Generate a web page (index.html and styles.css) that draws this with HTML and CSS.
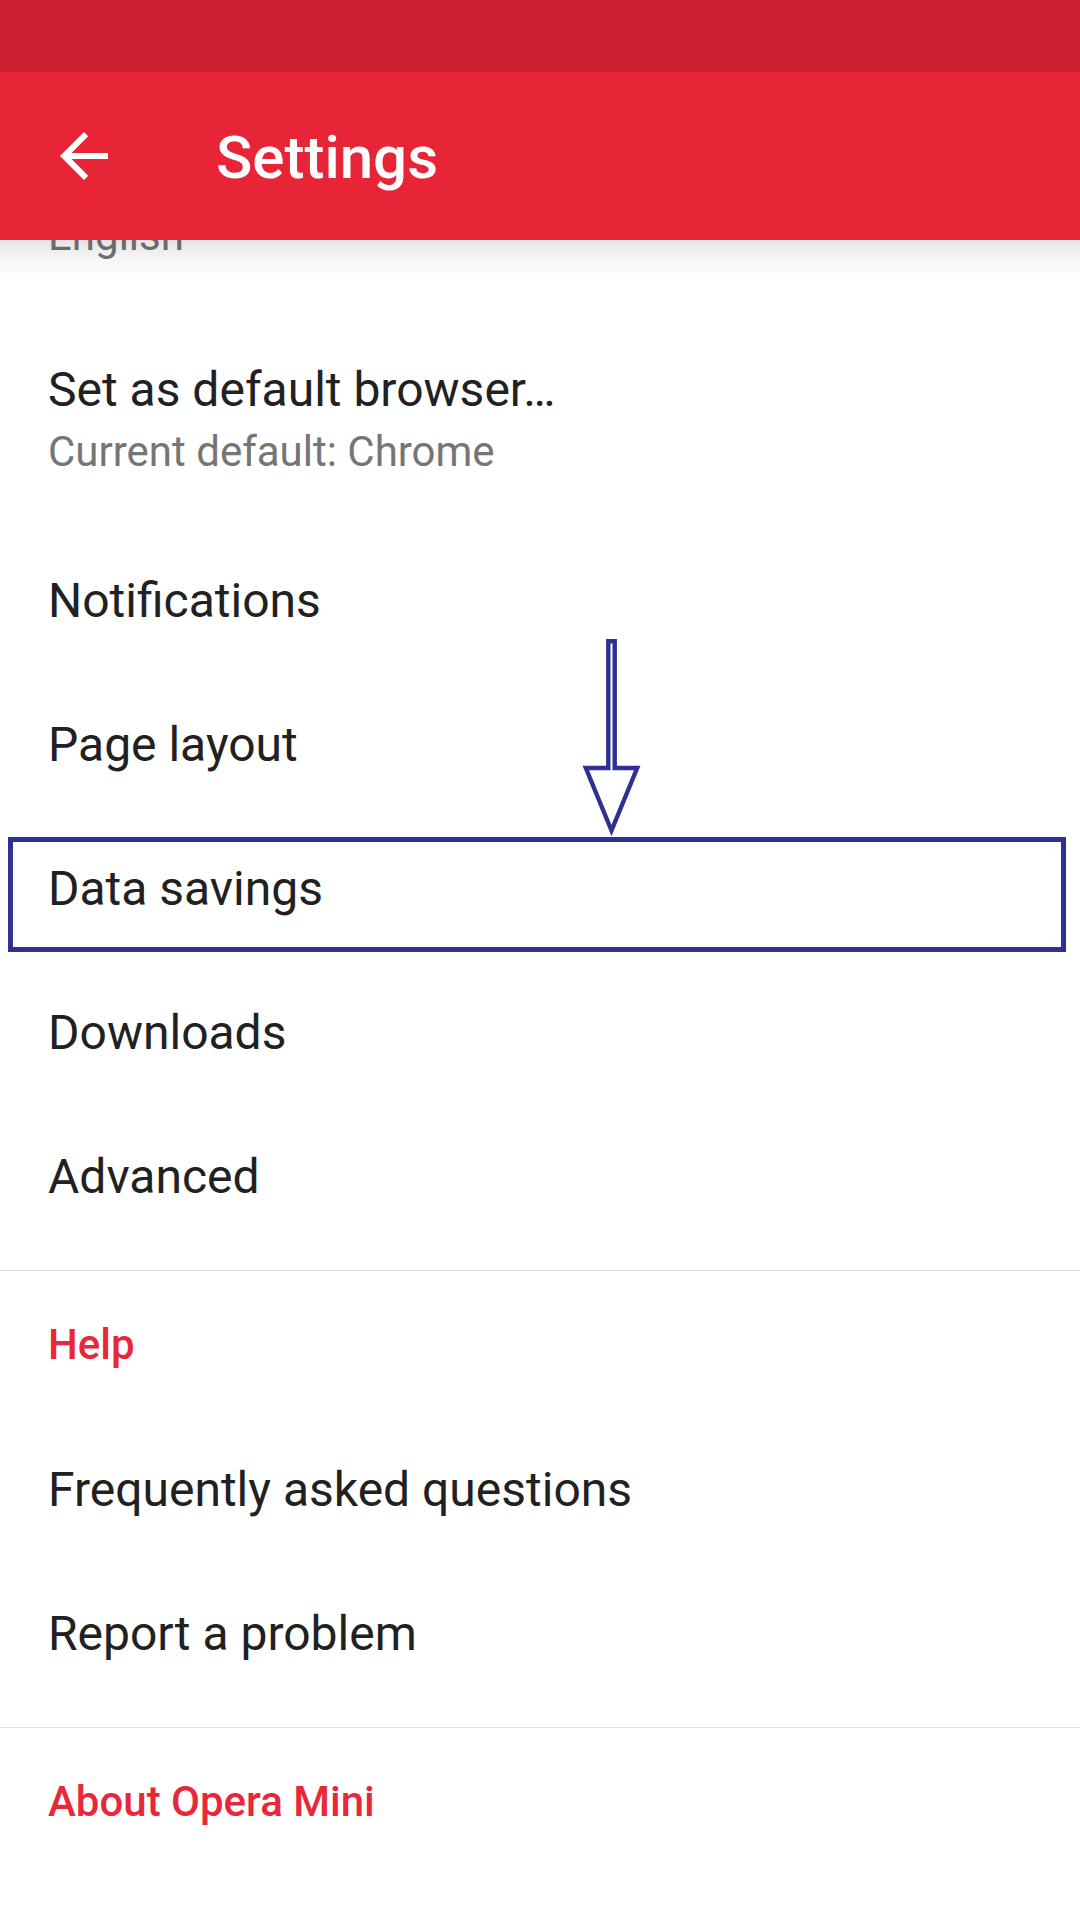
FILE: index.html
```html
<!DOCTYPE html>
<html lang="en">
<head>
<meta charset="utf-8">
<title>Settings</title>
<link rel="stylesheet" href="styles.css">
</head>
<body>
<div class="app">
  <div class="statusbar"></div>
  <header class="toolbar">
    <svg class="back" viewBox="0 0 24 24" width="72" height="72" aria-hidden="true">
      <path d="M20 11H7.83l5.59-5.59L12 4l-8 8 8 8 1.41-1.41L7.83 13H20v-2z" fill="#ffffff"/>
    </svg>
    <h1 class="title">Settings</h1>
  </header>
  <main class="content">
    <section class="group">
      <div class="pref pref-two">
        <div class="pref-title pref-title-covered">Language</div>
        <div class="pref-summary">English</div>
      </div>
      <div class="pref pref-two">
        <div class="pref-title">Set as default browser…</div>
        <div class="pref-summary">Current default: Chrome</div>
      </div>
      <div class="pref">Notifications</div>
      <div class="pref">Page layout</div>
      <div class="pref pref-marked">
        Data savings
        <div class="highlight"></div>
        <svg class="pointer" width="62" height="204" viewBox="0 0 62 204" aria-hidden="true">
          <polygon points="28.3,5.2 34.7,5.2 34.7,132 57.2,132 31.5,194.5 5.8,132 28.3,132" fill="#ffffff" stroke="#2e3192" stroke-width="4.4" stroke-linejoin="miter" stroke-miterlimit="10"/>
        </svg>
      </div>
      <div class="pref">Downloads</div>
      <div class="pref">Advanced</div>
    </section>
    <section class="group">
      <div class="category">Help</div>
      <div class="pref">Frequently asked questions</div>
      <div class="pref">Report a problem</div>
    </section>
    <section class="group group-last">
      <div class="category">About Opera Mini</div>
    </section>
  </main>
</div>
</body>
</html>
```

FILE: styles.css
```css
html, body {
  margin: 0;
  padding: 0;
  background: #ffffff;
}

body {
  font-family: Roboto, "Noto Sans", "Liberation Sans", sans-serif;
  color: #212121;
}

.app {
  width: 1080px;
  height: 1920px;
  overflow: hidden;
  background: #ffffff;
}

.statusbar {
  height: 72px;
  background: #cc2130;
  position: relative;
  z-index: 3;
}

.toolbar {
  position: relative;
  z-index: 2;
  height: 168px;
  background: #e82537;
  display: flex;
  align-items: center;
  padding-left: 48px;
  box-sizing: border-box;
}

.toolbar::after {
  content: "";
  position: absolute;
  left: 0;
  right: 0;
  top: 100%;
  height: 40px;
  background: linear-gradient(to bottom, rgba(0, 0, 0, 0.11), rgba(0, 0, 0, 0.04) 45%, rgba(0, 0, 0, 0));
  pointer-events: none;
}

.back {
  display: block;
  flex: none;
}

.title {
  margin: 0 0 0 96px;
  padding-top: 3px;
  font-size: 60px;
  font-weight: 500;
  color: #ffffff;
  letter-spacing: 0;
}

.content {
  position: relative;
  z-index: 1;
  margin-top: -144px;
}

.group {
  padding-bottom: 22px;
  border-bottom: 1px solid #dedede;
}

.group-last {
  border-bottom: none;
}

.pref {
  position: relative;
  height: 144px;
  display: flex;
  align-items: center;
  padding: 0 48px;
  font-size: 48px;
  color: #212121;
}

.pref-two {
  height: auto;
  display: block;
  padding: 50px 48px 52px;
}

.pref-title {
  font-size: 48px;
  line-height: 56px;
  color: #212121;
}

.pref-title-covered {
  visibility: hidden;
}

.pref-summary {
  margin-top: 9px;
  font-size: 42px;
  line-height: 49px;
  color: #757575;
}

.category {
  padding: 49px 48px 48px;
  font-size: 42px;
  font-weight: 500;
  color: #e8283a;
}

.highlight {
  position: absolute;
  left: 8px;
  top: 21px;
  width: 1058px;
  height: 115px;
  box-sizing: border-box;
  border: 5px solid #2e3192;
}

.pointer {
  position: absolute;
  left: 580px;
  top: -180px;
  display: block;
}
```
